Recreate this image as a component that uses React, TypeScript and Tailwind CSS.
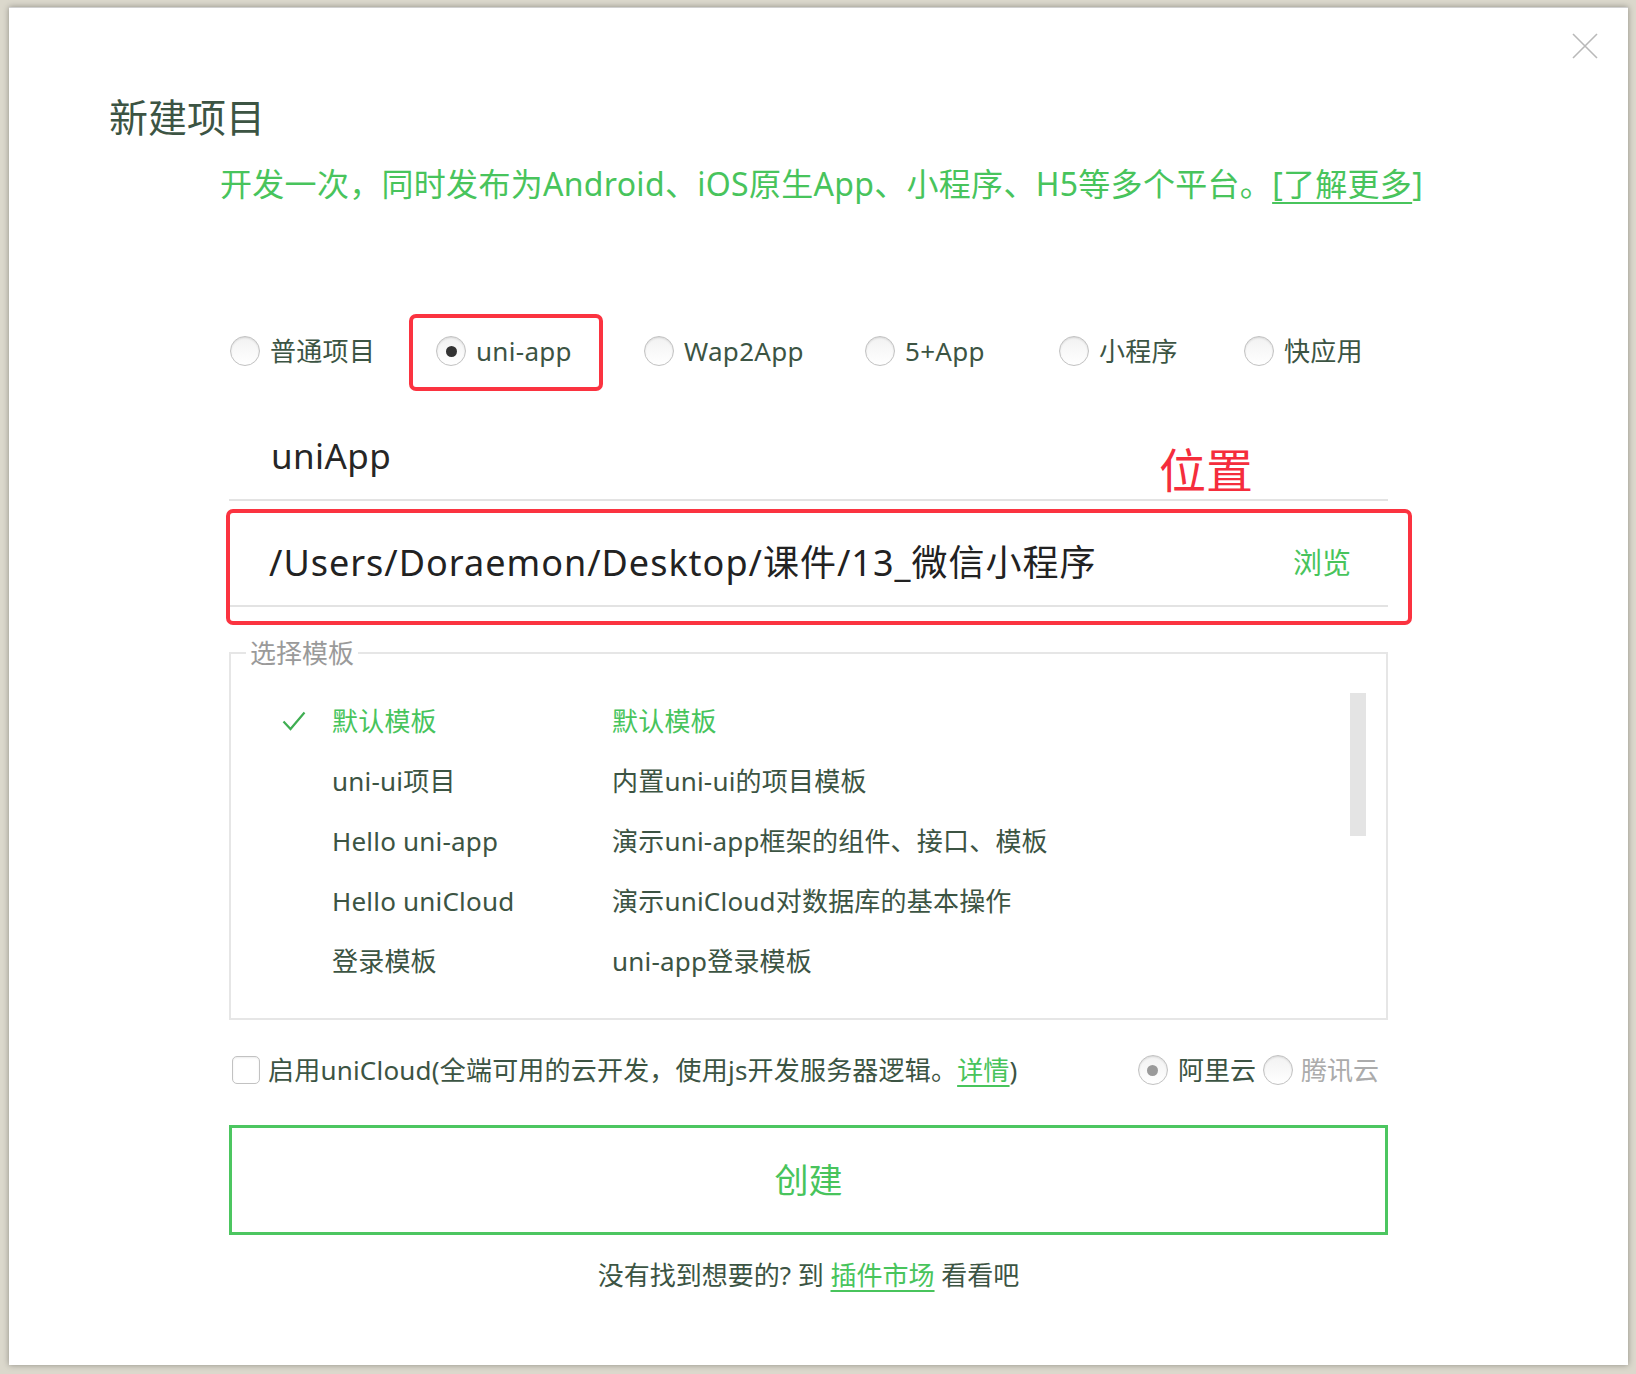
import React from "react";

const FONT = "font-['Noto_Sans','Noto_Sans_CJK_SC',sans-serif]";

function Radio({ checked = false, dot = "bg-[#333]" }: { checked?: boolean; dot?: string }) {
  return (
    <span className="flex h-[30px] w-[30px] shrink-0 items-center justify-center rounded-full border border-[#c2c2c2] bg-gradient-to-b from-[#f2f2f2] to-white shadow-[inset_0_1px_2px_rgba(0,0,0,0.12)]">
      {checked && <span className={`h-[11px] w-[11px] rounded-full ${dot}`} />}
    </span>
  );
}

const types: { label: string; w: string; checked?: boolean }[] = [
  { label: "普通项目", w: "w-[206px]" },
  { label: "uni-app", w: "w-[208px]", checked: true },
  { label: "Wap2App", w: "w-[221px]" },
  { label: "5+App", w: "w-[194px]" },
  { label: "小程序", w: "w-[185px]" },
  { label: "快应用", w: "w-auto" },
];

const templates = [
  ["默认模板", "默认模板"],
  ["uni-ui项目", "内置uni-ui的项目模板"],
  ["Hello uni-app", "演示uni-app框架的组件、接口、模板"],
  ["Hello uniCloud", "演示uniCloud对数据库的基本操作"],
  ["登录模板", "uni-app登录模板"],
];

export default function App() {
  return (
    <div className={`h-[1374px] w-[1636px] overflow-hidden bg-[#dbd8cc] pl-[9px] pt-[7px] ${FONT}`}>
      <div className="relative h-[1358px] w-[1619px] border-t border-[#d0d0d0] bg-white shadow-[0_0_6px_rgba(0,0,0,0.35)]">
        {/* close */}
        <svg className="absolute left-[1563px] top-[25px]" width="26" height="26" viewBox="0 0 26 26">
          <path d="M1 1 L25 25 M25 1 L1 25" stroke="#b9b9b9" strokeWidth="1.6" fill="none" />
        </svg>

        {/* title */}
        <div className="pl-[100px] pt-[86px] text-[39px] leading-[46px] text-[#3c5443]">新建项目</div>
        <div className="mt-[24px] pl-[211px] text-[32px] leading-[40px] tracking-[0.3px] text-[#48c45c]">
          开发一次，同时发布为Android、iOS原生App、小程序、H5等多个平台。
          <span className="underline decoration-2 underline-offset-[6px]">[了解更多</span>]
        </div>

        <div className="ml-[220px] w-[1159px]">
          {/* project types */}
          <div className="mt-[127px] flex h-[40px] items-center pl-[1px]">
            {types.map((t) => (
              <div key={t.label} className={`flex items-center gap-[10px] ${t.w}`}>
                <Radio checked={t.checked} />
                <span className="text-[26px] leading-[40px] tracking-[0.3px] text-[#3c5443]">{t.label}</span>
              </div>
            ))}
          </div>

          {/* name */}
          <div className="mt-[42px] flex h-[88px] items-center border-b-2 border-[#e3e3e3] pl-[42px] text-[35px] tracking-[0.4px] text-[#262626]">
            uniApp
          </div>

          {/* location */}
          <div className="mt-[20px] flex h-[86px] items-center justify-between border-b-2 border-[#e3e3e3] pl-[40px] pr-[37px]">
            <span className="text-[36px] tracking-[1px] text-[#222]">/Users/Doraemon/Desktop/课件/13_微信小程序</span>
            <span className="text-[29px] text-[#48c45c]">浏览</span>
          </div>

          {/* templates */}
          <fieldset className="relative mt-[30px] h-[383px] border-2 border-[#e6e6e6]">
            <legend className="ml-[15px] px-[4px] text-[26px] leading-[32px] text-[#9a9a9a]">选择模板</legend>
            <div className="pt-[22px]">
              {templates.map(([a, b], i) => (
                <div key={a} className="flex h-[60px] items-center pl-[51px] text-[26px] tracking-[0.2px]">
                  <span className="w-[50px]">
                    {i === 0 && (
                      <svg width="24" height="20" viewBox="0 0 24 20">
                        <path d="M1.5 10.5 L8.5 18 L22.5 1.5" stroke="#3fae52" strokeWidth="2.2" fill="none" />
                      </svg>
                    )}
                  </span>
                  <span className={`w-[280px] ${i === 0 ? "text-[#48c45c]" : "text-[#3c5443]"}`}>{a}</span>
                  <span className={i === 0 ? "text-[#48c45c]" : "text-[#3c5443]"}>{b}</span>
                </div>
              ))}
            </div>
            <div className="absolute right-[20px] top-[24px] h-[143px] w-[16px] bg-[#e4e4e4]" />
          </fieldset>

          {/* unicloud */}
          <div className="mt-[30px] flex h-[40px] items-center pl-[3px] pr-[9px] text-[26px] text-[#3c5443]">
            <span className="h-[28px] w-[28px] shrink-0 rounded-[5px] border border-[#c2c2c2] bg-white shadow-[inset_0_1px_2px_rgba(0,0,0,0.08)]" />
            <span className="ml-[8px] tracking-[0.2px]">
              启用uniCloud(全端可用的云开发，使用js开发服务器逻辑。
              <span className="text-[#48c45c] underline decoration-2 underline-offset-[5px]">详情</span>)
            </span>
            <div className="ml-auto flex items-center">
              <Radio checked dot="bg-[#9a9a9a]" />
              <span className="ml-[10px] text-[#3c5443]">阿里云</span>
              <span className="ml-[7px]">
                <Radio />
              </span>
              <span className="ml-[8px] text-[#ababab]">腾讯云</span>
            </div>
          </div>

          {/* create */}
          <div className="mt-[35px] flex h-[110px] items-center justify-center border-[3px] border-[#4cc660] text-[34px] text-[#48c45c]">
            创建
          </div>

          <div className="mt-[22px] text-center text-[26px] leading-[36px] text-[#3c5443]">
            没有找到想要的? 到{" "}
            <span className="text-[#48c45c] underline decoration-2 underline-offset-[5px]">插件市场</span> 看看吧
          </div>
        </div>

        {/* annotations */}
        <div className="absolute left-[400px] top-[306px] h-[77px] w-[194px] rounded-[7px] border-4 border-[#fb3340]" />
        <div className="absolute left-[217px] top-[501px] h-[116px] w-[1186px] rounded-[7px] border-4 border-[#fb3340]" />
        <div className="absolute left-[1150px] top-[432px] text-[47px] leading-[60px] text-[#f52d3c]">位置</div>
      </div>
    </div>
  );
}
